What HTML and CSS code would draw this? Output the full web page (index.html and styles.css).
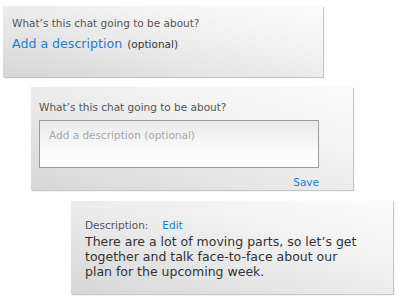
FILE: index.html
```html
<!DOCTYPE html>
<html>
<head>
<meta charset="utf-8">
<link rel="stylesheet" href="styles.css">
</head>
<body>
<div class="stack">
  <section class="card card-one">
    <div class="label">What’s this chat going to be about?</div>
    <div class="add"><span class="link big">Add a description</span> <span class="opt">(optional)</span></div>
  </section>
  <section class="card card-two">
    <div class="label">What’s this chat going to be about?</div>
    <div class="field">Add a description (optional)</div>
    <div class="actions"><span class="link">Save</span></div>
  </section>
  <section class="card card-three">
    <div class="desc-head"><span class="label">Description:</span><span class="link">Edit</span></div>
    <p class="desc">There are a lot of moving parts, so let’s get together and talk face-to-face about our plan for the upcoming week.</p>
  </section>
</div>
</body>
</html>
```

FILE: styles.css
```css
html, body {
  margin: 0;
  padding: 0;
  background: #fff;
}
body {
  font-family: "DejaVu Sans", Verdana, sans-serif;
  width: 399px;
  height: 300px;
  overflow: hidden;
}
.stack {
  display: flex;
  flex-direction: column;
  align-items: flex-start;
  padding-top: 6px;
}
.card {
  box-sizing: border-box;
  background: linear-gradient(to top right, #d6d6d6 0%, #e8e8e8 40%, #f5f5f5 75%, #fbfbfb 100%);
  box-shadow: 1px 1px 1px rgba(0,0,0,0.22), 0 0 1px rgba(0,0,0,0.08);
}
.card-one {
  margin-left: 3px;
  width: 320px;
  height: 71px;
  padding: 11px 0 0 9px;
}
.card-two {
  margin-left: 31px;
  margin-top: 10px;
  width: 322px;
  height: 103px;
  padding: 14px 0 0 8px;
}
.card-three {
  margin-left: 71px;
  margin-top: 11px;
  width: 322px;
  height: 93px;
  padding: 18px 0 0 14px;
}
.label {
  font-size: 10.5px;
  color: #555;
  line-height: 13px;
}
.link {
  color: #1b7fd2;
}
.add {
  margin-top: 4px;
  line-height: 17px;
}
.big {
  font-size: 12.6px;
}
.opt {
  font-size: 10.5px;
  color: #333;
}
.field {
  box-sizing: border-box;
  margin-top: 6px;
  width: 280px;
  height: 48px;
  border: 1px solid #9a9a9a;
  background: linear-gradient(#eaeaea, #fcfcfc 70%, #fff);
  padding: 8px 0 0 9px;
  font-size: 10.5px;
  color: #a8a8a8;
  line-height: 13px;
}
.actions {
  width: 280px;
  display: flex;
  justify-content: flex-end;
  margin-top: 8px;
  font-size: 10.5px;
  line-height: 13px;
}
.desc-head {
  display: flex;
  gap: 14px;
  font-size: 10.5px;
  line-height: 13px;
}
.desc-head .link {
  font-size: 10.5px;
}
.desc {
  margin: 2px 0 0 0;
  width: 278px;
  font-size: 12.5px;
  line-height: 15px;
  color: #333;
}
```
